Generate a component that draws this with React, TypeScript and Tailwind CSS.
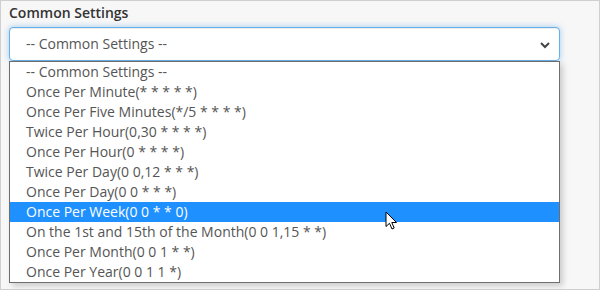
import React from 'react'

const options = [
  '-- Common Settings --',
  'Once Per Minute(* * * * *)',
  'Once Per Five Minutes(*/5 * * * *)',
  'Twice Per Hour(0,30 * * * *)',
  'Once Per Hour(0 * * * *)',
  'Twice Per Day(0 0,12 * * *)',
  'Once Per Day(0 0 * * *)',
  'Once Per Week(0 0 * * 0)',
  'On the 1st and 15th of the Month(0 0 1,15 * *)',
  'Once Per Month(0 0 1 * *)',
  'Once Per Year(0 0 1 1 *)',
]

const ACTIVE = 7

function Cursor() {
  return (
    <svg width="13" height="20" viewBox="0 0 13 20" className="absolute left-[384px] top-[210px]">
      <path
        d="M1 1 L1 15.5 L4.5 12.3 L7 18 L9.2 17 L6.8 11.5 L11.5 11.5 Z"
        fill="white"
        stroke="black"
        strokeWidth="1"
        strokeLinejoin="round"
      />
    </svg>
  )
}

export default function App() {
  return (
    <div
      className="relative w-[600px] h-[290px] bg-[#f7f7f7] border border-[#cfcfcf] overflow-hidden"
      style={{ fontFamily: '"Open Sans", "Liberation Sans", sans-serif' }}
    >
      <div className="px-[8px]">
        <div className="h-[26px] pt-[2px] text-[14px] leading-[20px] font-semibold text-[#333]">
          Common Settings
        </div>

        {/* select box, focused */}
        <div className="w-[551px] h-[34px] bg-white border border-[#66afe9] rounded-[4px] shadow-[inset_0_1px_1px_rgba(0,0,0,0.075),0_0_6px_rgba(102,175,233,0.6)] flex items-center justify-between pl-[16px] pr-[8px]">
          <span className="text-[14px] text-[#555] leading-[20px]">-- Common Settings --</span>
          <svg width="12" height="12" viewBox="0 0 12 12" className="mt-[1px]">
            <path d="M2 4 L6 8 L10 4" fill="none" stroke="#444" strokeWidth="2" />
          </svg>
        </div>

        {/* open option list */}
        <div className="w-[551px] bg-white border border-[#6e6e6e] py-[0px] shadow-[3px_3px_6px_rgba(0,0,0,0.18)]">
          {options.map((o, i) => (
            <div
              key={o}
              className={`h-[20px] leading-[20px] pl-[16px] text-[14px] whitespace-nowrap ${
                i === ACTIVE ? 'bg-[#1e90ff] text-white' : 'text-[#555]'
              }`}
            >
              {o}
            </div>
          ))}
        </div>
      </div>
      <Cursor />
    </div>
  )
}
